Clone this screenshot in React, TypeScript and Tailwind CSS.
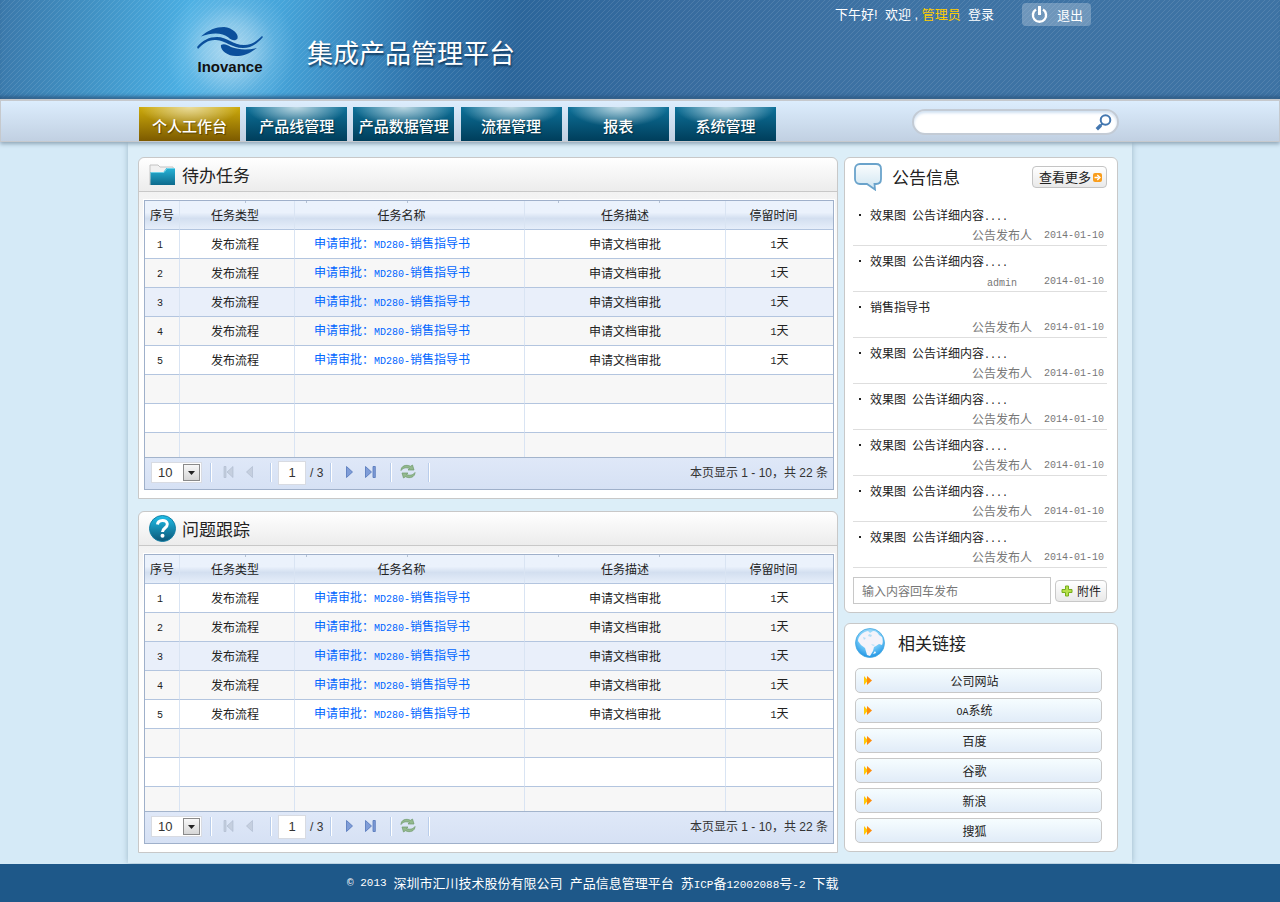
import type { ReactNode } from 'react';
import clsx from 'clsx';

const navItems = ['个人工作台', '产品线管理', '产品数据管理', '流程管理', '报表', '系统管理'];

const tasks = [1, 2, 3, 4, 5].map((id) => ({
  id,
  type: '发布流程',
  model: 'MD280-',
  desc: '申请文档审批',
  days: 1,
}));

const notices = [
  { tag: '效果图', title: '公告详细内容', author: '公告发布人' },
  { tag: '效果图', title: '公告详细内容', author: 'admin' },
  { tag: '销售指导书', title: '', author: '公告发布人' },
  { tag: '效果图', title: '公告详细内容', author: '公告发布人' },
  { tag: '效果图', title: '公告详细内容', author: '公告发布人' },
  { tag: '效果图', title: '公告详细内容', author: '公告发布人' },
  { tag: '效果图', title: '公告详细内容', author: '公告发布人' },
  { tag: '效果图', title: '公告详细内容', author: '公告发布人' },
];

const links = ['公司网站', 'OA系统', '百度', '谷歌', '新浪', '搜狐'];

// Small fixed-width latin text that sits between the chinese characters
function Mono({ children }: { children: ReactNode }) {
  return <span className="font-['Liberation_Mono',monospace] text-[10px]">{children}</span>;
}

function FooterMono({ children }: { children: ReactNode }) {
  return <span className="font-['Liberation_Mono',monospace] text-[11px]">{children}</span>;
}

function LogoMark() {
  return (
    <svg width="66" height="30" viewBox="0 0 66 30" fill="#0b4f9c" aria-hidden="true">
      <path d="M4 9.500C11 3 19 0 27 0c9 1 15 7 13.500 11.500-2 3-6 2-9-1C25 5.500 15 5.500 4 9.500z" />
      <path d="M0 20C6 13 12 10 20 10c10 0 16 8 27 8 8 0 13-4 18-9l1 1C60 17 54 21 46 21 34 21 29 13.500 19 13 11 12.500 6 17 1 22z" />
      <path d="M24 18c3-2 7 0 10 2 8 3 17 3 26 1-8 6-14 8-21 8-9 0-16-6-15-11z" />
    </svg>
  );
}

function PowerIcon() {
  return (
    <svg width="17" height="18" viewBox="0 0 17 18" fill="none" stroke="#fff" strokeWidth="2.4" aria-hidden="true">
      <path d="M5 3.600a6.600 6.600 0 1 0 7 0" />
      <path d="M8.500 0v9" strokeWidth="3" />
    </svg>
  );
}

function SearchIcon() {
  return (
    <svg width="17" height="17" viewBox="0 0 17 17" fill="none" stroke="#4377b0" aria-hidden="true">
      <circle cx="10.500" cy="6" r="4.800" strokeWidth="2" />
      <path d="M7.500 9.500 5.500 11.500" strokeWidth="2" />
      <path d="M5.800 11.200 1.800 15.200" strokeWidth="3.400" />
    </svg>
  );
}

function FolderIcon() {
  return (
    <svg width="27" height="22" viewBox="0 0 27 22" aria-hidden="true">
      <defs>
        <linearGradient id="folder" x1="0" y1="0" x2="0" y2="1">
          <stop offset="0" stopColor="#27b4d8" />
          <stop offset="1" stopColor="#0d6a8c" />
        </linearGradient>
      </defs>
      <path d="M1 21V1h8l2 2h13l1 3v9H2z" fill="#f1f1f1" stroke="#c4c4c4" />
      <path d="M1.500 8h13l3-4H26v17H1.500z" fill="url(#folder)" />
      <path d="M2 8.500h13l3-4h8" fill="none" stroke="#7fdcf0" strokeWidth=".8" />
    </svg>
  );
}

function QuestionIcon() {
  return (
    <svg width="27" height="27" viewBox="0 0 27 27" aria-hidden="true">
      <defs>
        <linearGradient id="question" x1="0" y1="0" x2="0" y2="1">
          <stop offset="0" stopColor="#1fc0ea" />
          <stop offset="1" stopColor="#0d5677" />
        </linearGradient>
      </defs>
      <circle cx="13.500" cy="13.500" r="13" fill="url(#question)" stroke="#127fa5" />
      <path d="M8.500 9.500c.5-5 9.500-5.500 9.800-.3.200 3.800-4.800 3.800-4.800 7.800" fill="none" stroke="#fff" strokeWidth="3" />
      <circle cx="13.500" cy="20.700" r="2" fill="#fff" />
    </svg>
  );
}

function BubbleIcon() {
  return (
    <svg width="28" height="28" viewBox="0 0 28 28" aria-hidden="true">
      <defs>
        <linearGradient id="bubble" x1="0" y1="0" x2="0" y2="1">
          <stop offset="0" stopColor="#fbfdfe" />
          <stop offset="1" stopColor="#cfe5f1" />
        </linearGradient>
      </defs>
      <path
        d="M6 1h16c3 0 5 2 5 5v10c0 3-2 5-5 5h-1.500l.5 5.500L13 21H6c-3 0-5-2-5-5V6c0-3 2-5 5-5z"
        fill="url(#bubble)"
        stroke="#6aa3cb"
        strokeWidth="1.800"
      />
    </svg>
  );
}

function GlobeIcon() {
  return (
    <svg width="30" height="30" viewBox="0 0 30 30" aria-hidden="true">
      <defs>
        <radialGradient id="globe" cx=".5" cy=".3" r=".7">
          <stop offset="0" stopColor="#c8ebfd" />
          <stop offset=".6" stopColor="#6cc5f6" />
          <stop offset="1" stopColor="#1e93e4" />
        </radialGradient>
      </defs>
      <circle cx="15" cy="15" r="14.500" fill="url(#globe)" stroke="#49a9df" strokeWidth=".8" />
      <path d="M3 13c0-5 5-9 10-10l2 2 3-2c3 0 5 2 6 4l3 2c1 3 1 6 0 8l-3-1-3 2-2 1-1 4-3 5-3-1-2-7-4-3z" fill="#f4f3fa" />
      <path d="M14 6l3 1-1 2-3-1zM8 9l3 1-2 2zM16 16l4 1-2 1z" fill="#b5dff7" />
      <path d="M18 26l2-3 1 2z" fill="#fff" />
    </svg>
  );
}

function RefreshIcon() {
  return (
    <svg width="16" height="15" viewBox="0 0 16 15" fill="#93b98e" stroke="#6f9a6c" strokeWidth=".7" aria-hidden="true">
      <path d="M1 6.500C1 2 6 0 10.500 2.300L12.500 1l1.500 5H8l1.500-1.500C6 3 3 4 1 6.500z" />
      <path d="M15 8.500C15 13 10 15 5.500 12.700L3.500 14 2 9h6l-1.500 1.500C10 12 13 11 15 8.500z" />
    </svg>
  );
}

function Separator({ className, children }: { className: string; children?: ReactNode }) {
  return (
    <div className={clsx('flex h-[19px] items-center border-l border-[#b9cdeb] shadow-[inset_1px_0_0_#fff]', className)}>
      {children}
    </div>
  );
}

function Pager({ name }: { name: string }) {
  return (
    <div className="flex h-8 items-center border-t border-[#a3b4cc] bg-linear-to-b from-[#dfe8f8] to-[#d6e1f4] pr-[5px] pl-[6px] pb-[2px] font-['Liberation_Sans','Noto_Sans_CJK_SC',sans-serif] text-[12px] text-[#333]">
      <div className="relative mr-2">
        <select
          aria-label={`${name}每页条数`}
          className="block h-[21px] w-[51px] appearance-none border border-[#d8dbe2] bg-white pl-[6px] text-[13px] leading-[18px]"
        >
          <option>10</option>
          <option>20</option>
        </select>
        <span className="pointer-events-none absolute top-[2px] right-[2px] flex h-[17px] w-[17px] items-center justify-center border border-[#8a8a8a] bg-linear-to-b from-[#f8f8f8] to-[#d6d6d6]">
          <svg width="7" height="4" viewBox="0 0 7 4" aria-hidden="true">
            <path d="M0 0h7L3.500 4z" fill="#222" />
          </svg>
        </span>
      </div>
      <Separator className="w-[60px] gap-3 pb-[2px] pl-3">
        <button aria-label="首页" disabled>
          <svg width="11" height="12" viewBox="0 0 11 12" fill="#c5cfdf" stroke="#adb9cc" strokeWidth=".6">
            <path d="M1 .5h2v11H1zM10 .5v11L4 6z" />
          </svg>
        </button>
        <button aria-label="上一页" disabled>
          <svg width="7" height="12" viewBox="0 0 7 12" fill="#c5cfdf" stroke="#adb9cc" strokeWidth=".6">
            <path d="M6.500.5v11L.5 6z" />
          </svg>
        </button>
      </Separator>
      <Separator className="w-[60px] gap-1 pl-[7px]">
        <input
          aria-label={`${name}页码`}
          defaultValue="1"
          className="h-6 w-7 border border-[#d8dbe2] bg-white text-center text-[13px] outline-none"
        />
        <span>/ 3</span>
      </Separator>
      <Separator className="w-[60px] gap-3 pb-[2px] pl-[15px]">
        <button aria-label="下一页">
          <svg width="7" height="12" viewBox="0 0 7 12" fill="#7f9dd8" stroke="#5275b9" strokeWidth=".8">
            <path d="M.5.5v11l6-5.500z" />
          </svg>
        </button>
        <button aria-label="末页">
          <svg width="11" height="12" viewBox="0 0 11 12" fill="#7f9dd8" stroke="#5275b9" strokeWidth=".8">
            <path d="M.5.5v11l6-5.500zM8 .5h2.300v11H8z" />
          </svg>
        </button>
      </Separator>
      <Separator className="w-[38px] pb-[2px] pl-[9px]">
        <button aria-label="刷新">
          <RefreshIcon />
        </button>
      </Separator>
      <Separator className="w-[2px]" />
      <span className="ml-auto whitespace-nowrap">本页显示 1 - 10，共 22 条</span>
    </div>
  );
}

function Tick({ className }: { className: string }) {
  return <span className={clsx('absolute top-0 h-[2px] w-px bg-[#b4c1d3]', className)} />;
}

function TaskTable({ name }: { name: string }) {
  const head = 'relative h-[29px] border-b border-[#b3c5df] p-0 font-normal';
  const cell = 'border-b border-[#b3c5df] p-0 text-center';
  const line = 'border-r border-r-[#d9e4f3]';

  return (
    <div className="mt-2 mr-[3px] mb-2 ml-[5px] border border-[#9fb0ca] bg-white shadow-[0_0_0_1px_#fff]">
      <table className="w-full table-fixed border-separate border-spacing-0 text-[12px] leading-4 text-[#222]">
        <colgroup>
          <col className="w-[35px]" />
          <col className="w-[115px]" />
          <col className="w-[230px]" />
          <col />
          <col className="w-[107px]" />
        </colgroup>
        <thead className="bg-linear-to-b from-[#ebf2fc] from-40% via-[#d3dff0] via-60% to-[#e8f0fb]">
          <tr>
            <th className={clsx(head, line)}>序号</th>
            <th className={clsx(head, line, 'pr-1')}>
              <Tick className="left-[65px]" />
              任务类型
            </th>
            <th className={clsx(head, line, 'pr-4')}>
              <Tick className="left-[11px]" />
              <Tick className="left-[112px]" />
              任务名称
            </th>
            <th className={clsx(head, line)}>
              <Tick className="left-[33px]" />
              <Tick className="left-[134px]" />
              任务描述
            </th>
            <th className={clsx(head, 'pr-3')}>停留时间</th>
          </tr>
        </thead>
        <tbody>
          {tasks.map((task, i) => (
            <tr
              key={task.id}
              className={clsx('h-[29px]', i === 2 ? 'bg-[#e9effa]' : i % 2 ? 'bg-[#f7f7f7]' : 'bg-white')}
            >
              <td className={clsx(cell, line, 'pr-1')}>
                <Mono>{task.id}</Mono>
              </td>
              <td className={clsx(cell, line, 'pr-1')}>{task.type}</td>
              <td className={clsx(cell, line, 'pl-[19px] text-left')}>
                <a href="#" className="text-[#0066ff]">
                  申请审批：<Mono>{task.model}</Mono>销售指导书
                </a>
              </td>
              <td className={clsx(cell, line)}>{task.desc}</td>
              <td className={cell}>
                <Mono>{task.days}</Mono>天
              </td>
            </tr>
          ))}
          {['h-[29px] bg-[#f7f7f7]', 'h-[29px] bg-white', 'h-6 bg-[#f7f7f7]'].map((row, i) => (
            <tr key={row} className={row}>
              {[0, 1, 2, 3, 4].map((n) => (
                <td key={n} className={clsx('p-0', i < 2 && 'border-b border-b-[#b3c5df]', n < 4 && line)} />
              ))}
            </tr>
          ))}
        </tbody>
      </table>
      <Pager name={name} />
    </div>
  );
}

function TaskPanel({ title, icon }: { title: string; icon: ReactNode }) {
  return (
    <section className="rounded-t-md border border-[#c8c8c8] bg-linear-to-b from-[#f2f2f2] from-10% to-white to-30%">
      <div className="flex h-[34px] items-center gap-[6px] rounded-t-md border-b border-[#c8c8c8] bg-linear-to-b from-white to-[#ececec] pl-[9px]">
        <span className="flex w-7 justify-center">{icon}</span>
        <h2 className="text-[17px] leading-6 text-[#222]">{title}</h2>
      </div>
      <TaskTable name={title} />
    </section>
  );
}

function NoticePanel() {
  return (
    <section className="rounded-md border border-[#c8c8c8] bg-white pr-[10px] pb-2 pl-2">
      <div className="flex h-[42px] items-center pb-1">
        <span className="ml-px">
          <BubbleIcon />
        </span>
        <h2 className="ml-[10px] text-[17px] leading-6 text-[#222]">公告信息</h2>
        <button className="ml-auto flex h-[22px] items-center gap-[2px] rounded border border-[#c4c4c4] bg-linear-to-b from-white to-[#e9e9e9] pr-1 pl-[6px] text-[13px] leading-4 text-[#222]">
          查看更多
          <svg width="9" height="9" viewBox="0 0 9 9" aria-hidden="true">
            <rect width="9" height="9" rx="2" fill="#f99d1c" />
            <path d="M1.500 4.500h4M4.300 2l2.700 2.500L4.300 7" fill="none" stroke="#fff" strokeWidth="1.300" />
          </svg>
        </button>
      </div>
      <ul className="text-[12px]">
        {notices.map((notice, i) => (
          <li key={i} className="flex h-[46px] flex-col justify-end border-b border-[#dedede]">
            <a href="#" className="flex h-5 items-center gap-[9px] pl-[6px] text-[#222]">
              <span className="h-[2px] w-[2px] bg-[#222]" />
              <span className="flex items-center gap-[6px]">
                <span>{notice.tag}</span>
                {notice.title && (
                  <span>
                    {notice.title}
                    <Mono>....</Mono>
                  </span>
                )}
              </span>
            </a>
            <div className="flex h-5 items-center justify-end gap-3 pr-[3px] text-[#777]">
              <span className="w-[60px] text-center">
                {notice.author === 'admin' ? <Mono>admin</Mono> : notice.author}
              </span>
              <Mono>2014-01-10</Mono>
            </div>
          </li>
        ))}
      </ul>
      <form className="mt-[9px] flex items-center gap-1">
        <input
          aria-label="发布公告"
          placeholder="输入内容回车发布"
          className="h-[27px] min-w-0 flex-1 border border-[#c8c8c8] px-2 text-[12px] outline-none placeholder:text-[#777]"
        />
        <button
          type="button"
          className="flex h-[22px] items-center gap-1 rounded border border-[#c8c8c8] bg-linear-to-b from-white to-[#e9e9e9] px-[5px] text-[12px] leading-4 text-[#222]"
        >
          <svg width="12" height="12" viewBox="0 0 12 12" aria-hidden="true">
            <path d="M4.500 1h3v3.500H11v3H7.500V11h-3V7.500H1v-3h3.500z" fill="#b6e04a" stroke="#76ae1c" />
          </svg>
          附件
        </button>
      </form>
    </section>
  );
}

function LinksPanel() {
  return (
    <section className="rounded-md border border-[#c8c8c8] bg-white pr-[15px] pb-2 pl-[10px]">
      <div className="flex h-11 items-center gap-[13px] pb-[6px]">
        <GlobeIcon />
        <h2 className="text-[17px] leading-6 text-[#222]">相关链接</h2>
      </div>
      <ul className="flex flex-col gap-[5px]">
        {links.map((link) => (
          <li key={link}>
            <a
              href="#"
              className="flex h-[25px] items-center rounded-[5px] border border-[#c8c8c8] bg-linear-to-b from-[#f6fdff] to-[#e1ecf8] px-2 text-[12px] text-[#222]"
            >
              <svg width="8" height="9" viewBox="0 0 8 9" aria-hidden="true">
                <path d="M0 0l4 4.500L0 9z" fill="#ffcb05" />
                <path d="M3 0l5 4.500L3 9z" fill="#ff8c0a" />
              </svg>
              <span className="flex-1 pr-4 text-center">
                {link === 'OA系统' ? (
                  <>
                    <Mono>OA</Mono>系统
                  </>
                ) : (
                  link
                )}
              </span>
            </a>
          </li>
        ))}
      </ul>
    </section>
  );
}

function Header() {
  return (
    <header className="h-[99px] pr-5 shadow-[inset_0_-5px_4px_-3px_#24527d] [background:radial-gradient(circle_at_230px_50px,#ffffff90_0,#ffffff58_26px,#ffffff1c_46px,#ffffff00_66px),linear-gradient(135deg,#ffffff00_42%,#ffffff1a_42%_58%,#ffffff00_58%)_0_0/5px_5px,linear-gradient(97deg,#3b78aa_0,#4191c3_90px,#4bafe3_190px,#46a5da_280px,#3b8cc3_350px,#3073aa_430px,#2c669b_520px,#386c9f_680px,#3e73a4_900px)]">
      <div className="mx-auto flex max-w-[1004px] items-start pr-[41px] pl-[69px]">
        <a href="#" className="flex w-[66px] flex-col items-center pt-[27px]">
          <LogoMark />
          <span className="font-['Liberation_Sans',sans-serif] text-[15px] leading-5 font-bold text-[#111]">
            Inovance
          </span>
        </a>
        <h1 className="ml-11 pt-9 text-[26px] leading-8 text-white [text-shadow:1px_2px_2px_#123a5e]">
          集成产品管理平台
        </h1>
        <div className="ml-auto flex items-center gap-7 pt-[3px] text-[13px] leading-5 text-white">
          <p className="font-['Liberation_Sans','Noto_Sans_CJK_SC',sans-serif]">
            下午好! &nbsp;欢迎 , <span className="text-[#ffcc00]">管理员</span> &nbsp;登录
          </p>
          <button className="flex h-[23px] w-[69px] items-center gap-[9px] rounded bg-white/25 pl-[9px]">
            <PowerIcon />
            退出
          </button>
        </div>
      </div>
    </header>
  );
}

function NavBar() {
  return (
    <div className="relative h-[43px] border border-t-2 border-[#c6c9cd] bg-linear-to-b from-[#dcedfd] to-[#c1d0e2] pr-5 shadow-[0_2px_4px_#8fa6b8]">
      <div className="mx-auto flex h-full max-w-[1004px] items-end justify-between pr-[13px] pl-[11px]">
        <nav className="flex w-[637px] justify-between">
          {navItems.map((item, i) => (
            <a
              key={item}
              href="#"
              className={clsx(
                'flex h-[34px] w-[101px] items-center justify-center pt-1 text-[15px] font-medium text-white [text-shadow:1px_1px_1px_#0006]',
                i === 0
                  ? '[background:radial-gradient(ellipse_50px_20px_at_50%_0,#fff9_0,#fff0_100%),linear-gradient(#ccaa0b,#7c5a00)]'
                  : '[background:radial-gradient(ellipse_50px_20px_at_50%_0,#fffb_0,#fff0_100%),linear-gradient(#0d7199,#003e5b)]',
              )}
            >
              {item}
            </a>
          ))}
        </nav>
        <form className="mb-[6px] flex h-[26px] w-[207px] items-center rounded-full border-2 border-[#c3cbd5] bg-white pr-[5px] pl-3 shadow-[inset_0_2px_3px_#cfe0f2]">
          <input aria-label="搜索" className="min-w-0 flex-1 bg-transparent text-[13px] outline-none" />
          <button type="button" aria-label="搜索">
            <SearchIcon />
          </button>
        </form>
      </div>
    </div>
  );
}

export default function App() {
  return (
    <div className="flex min-h-screen flex-col bg-[#d5eaf7] font-['Noto_Sans_CJK_SC',sans-serif]">
      <Header />
      <NavBar />
      <div className="flex-1 pr-5">
        <main className="mx-auto flex h-full max-w-[1004px] items-start gap-[6px] bg-[#dceef8] pt-[15px] pr-[14px] pb-[10px] pl-[10px] shadow-[0_0_6px_#9db7c8]">
          <div className="flex min-w-0 flex-1 flex-col gap-3">
            <TaskPanel title="待办任务" icon={<FolderIcon />} />
            <TaskPanel title="问题跟踪" icon={<QuestionIcon />} />
          </div>
          <aside className="flex w-[274px] flex-col gap-[10px]">
            <NoticePanel />
            <LinksPanel />
          </aside>
        </main>
      </div>
      <footer className="relative bg-[#1e5889] pr-5">
        <p className="mx-auto flex h-[38px] max-w-[1004px] items-center gap-[7px] pl-[219px] text-[13px] text-white">
          <FooterMono>© 2013</FooterMono>
          <span>深圳市汇川技术股份有限公司</span>
          <span>产品信息管理平台</span>
          <span>
            苏<FooterMono>ICP</FooterMono>备<FooterMono>12002088</FooterMono>号<FooterMono>-2</FooterMono>
          </span>
          <a href="#">下载</a>
        </p>
      </footer>
    </div>
  );
}
